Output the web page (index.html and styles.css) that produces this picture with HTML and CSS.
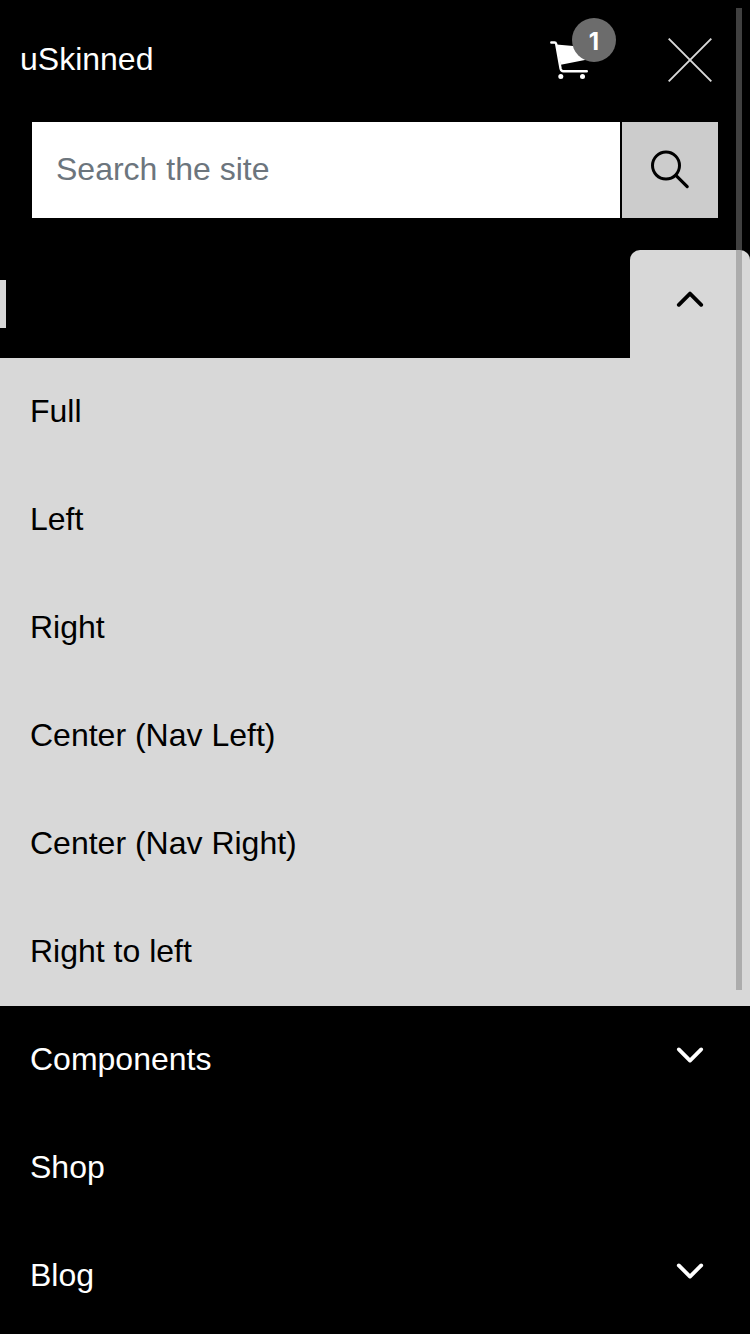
FILE: index.html
```html
<!DOCTYPE html>
<html lang="en">
<head>
<meta charset="utf-8">
<title>uSkinned</title>
<link rel="stylesheet" href="styles.css">
</head>
<body>
<div class="page">
  <header class="header">
    <a class="brand">uSkinned</a>
    <a class="cart" aria-label="Cart">
      <svg class="cart-icon" width="44" height="40" viewBox="0 0 44 40">
        <path d="M1.3 2.5H4.6Q5.8 2.5 6.2 4L10.6 28.8Q11.2 31.3 13.4 31.3H36.8" fill="none" stroke="currentColor" stroke-width="2.4" stroke-linecap="round" stroke-linejoin="round"/>
        <path d="M6.4 4.5L40 7.5V19L10.8 24.8Z" fill="currentColor"/>
        <circle cx="10.8" cy="36.6" r="2.5" fill="currentColor"/>
        <circle cx="32.5" cy="36.6" r="2.5" fill="currentColor"/>
      </svg>
      <span class="badge">1</span>
    </a>
    <svg class="close" width="44" height="44" viewBox="0 0 44 44">
      <path d="M.7.7L43.3 43.3M43.3.7L.7 43.3" fill="none" stroke="currentColor" stroke-width="1.9"/>
    </svg>
  </header>
  <form class="search">
    <input class="search-input" type="text" placeholder="Search the site">
    <button class="search-button" type="button" aria-label="Search">
      <svg class="search-icon" width="40" height="40" viewBox="0 0 40 40">
        <circle cx="16" cy="15.6" r="13.5" fill="none" stroke="currentColor" stroke-width="3"/>
        <path d="M26.4 25.8L37.2 36.6" fill="none" stroke="currentColor" stroke-width="3.2" stroke-linecap="round"/>
      </svg>
    </button>
  </form>
  <nav class="nav">
    <div class="row active">
      <span class="marker"></span>
      <span class="toggle open"><svg width="28" height="18" viewBox="0 0 28 18"><path class="chevron" d="M2.8 13.8L14 2.6L25.2 13.8"/></svg></span>
    </div>
    <div class="submenu">
      <a class="row">Full</a>
      <a class="row">Left</a>
      <a class="row">Right</a>
      <a class="row">Center (Nav Left)</a>
      <a class="row">Center (Nav Right)</a>
      <a class="row">Right to left</a>
    </div>
    <div class="row">Components<span class="toggle"><svg width="28" height="18" viewBox="0 0 28 18"><path class="chevron" d="M2.8 3.4L14 14.6L25.2 3.4"/></svg></span></div>
    <a class="row">Shop</a>
    <div class="row">Blog<span class="toggle"><svg width="28" height="18" viewBox="0 0 28 18"><path class="chevron" d="M2.8 3.4L14 14.6L25.2 3.4"/></svg></span></div>
  </nav>
  <div class="scrollbar"></div>
</div>
</body>
</html>
```
FILE: styles.css
```css
* { box-sizing: border-box; }
body {
  margin: 0;
  background: #000;
  color: #fff;
  font: 32px/48px "Liberation Sans", Arial, sans-serif;
}
.page {
  position: relative;
  height: 1334px;
  overflow: hidden;
}
.header {
  display: flex;
  align-items: center;
  height: 122px;
  padding: 0 38px 4px 20px;
}
.brand { flex: 1; }
.cart {
  position: relative;
  width: 118px;
  height: 40px;
  margin-top: 2px;
}
.cart-icon { display: block; }
.badge {
  position: absolute;
  left: 22px;
  top: -22px;
  width: 44px;
  height: 44px;
  border-radius: 50%;
  background: #6c6c6c;
  font: 700 24px/48px Inter, sans-serif;
  text-align: center;
}
.close {
  display: block;
  margin-top: 2px;
  color: #dadada;
}
.search {
  display: flex;
  gap: 2px;
  height: 96px;
  margin: 0 32px 32px;
}
.search-input {
  flex: 1;
  min-width: 0;
  padding: 0 24px 2px;
  border: 0;
  border-radius: 0;
  background: #fff;
  font: inherit;
}
.search-input::placeholder {
  color: #6c757d;
  opacity: 1;
}
.search-button {
  display: flex;
  align-items: center;
  justify-content: center;
  width: 96px;
  padding: 0;
  border: 0;
  background: #ccc;
  color: #000;
}
.row {
  display: flex;
  align-items: center;
  justify-content: space-between;
  height: 108px;
  padding: 0 0 2px 30px;
}
.active { padding: 0; }
.marker {
  width: 6px;
  height: 48px;
  background: #d8d8d8;
}
.submenu {
  background: #d8d8d8;
  color: #000;
}
.toggle {
  display: flex;
  align-items: center;
  justify-content: center;
  width: 120px;
  height: 108px;
  padding-bottom: 8px;
}
.open {
  border-radius: 10px 10px 0 0;
  background: #d8d8d8;
  color: #000;
}
.chevron {
  fill: none;
  stroke: currentColor;
  stroke-width: 3.8;
  stroke-linecap: round;
  stroke-linejoin: round;
}
.scrollbar {
  position: absolute;
  top: 8px;
  right: 8px;
  width: 6px;
  height: 982px;
  background: rgba(128, 128, 128, .5);
}
```
